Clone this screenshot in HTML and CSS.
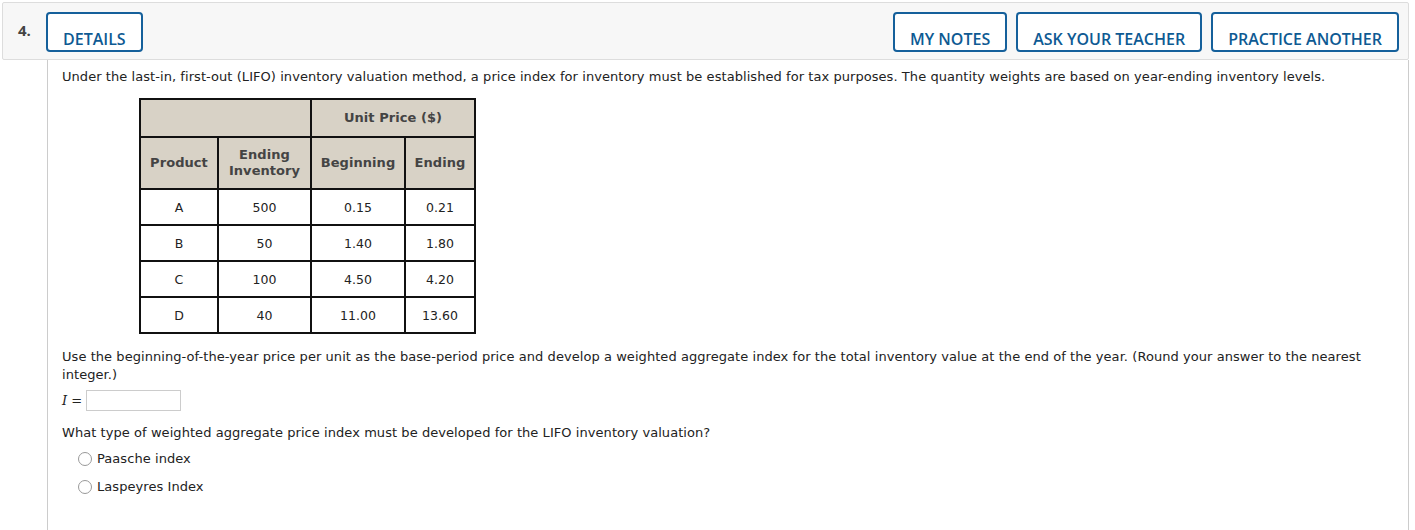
FILE: index.html
```html
<!DOCTYPE html>
<html>
<head>
<meta charset="utf-8">
<link rel="stylesheet" href="styles.css">
</head>
<body>
<div class="question">
  <div class="qhead">
    <span class="qnum">4.</span>
    <button class="btn">DETAILS</button>
    <div class="spacer"></div>
    <button class="btn">MY NOTES</button>
    <button class="btn">ASK YOUR TEACHER</button>
    <button class="btn">PRACTICE ANOTHER</button>
  </div>
  <div class="qbody">
    <p class="intro">Under the last-in, first-out (LIFO) inventory valuation method, a price index for inventory must be established for tax purposes. The quantity weights are based on year-ending inventory levels.</p>
    <table class="data">
      <tr class="h1">
        <th colspan="2"></th>
        <th colspan="2">Unit Price ($)</th>
      </tr>
      <tr class="h2">
        <th class="c1">Product</th>
        <th class="c2">Ending<br>Inventory</th>
        <th class="c3">Beginning</th>
        <th class="c4">Ending</th>
      </tr>
      <tr><td>A</td><td>500</td><td>0.15</td><td>0.21</td></tr>
      <tr><td>B</td><td>50</td><td>1.40</td><td>1.80</td></tr>
      <tr><td>C</td><td>100</td><td>4.50</td><td>4.20</td></tr>
      <tr><td>D</td><td>40</td><td>11.00</td><td>13.60</td></tr>
    </table>
    <p class="task">Use the beginning-of-the-year price per unit as the base-period price and develop a weighted aggregate index for the total inventory value at the end of the year. (Round your answer to the nearest integer.)</p>
    <div class="answer"><span class="var">I</span> <span class="eq">=</span> <span class="inbox"></span></div>
    <p class="task2">What type of weighted aggregate price index must be developed for the LIFO inventory valuation?</p>
    <div class="opt"><span class="radio"></span>Paasche index</div>
    <div class="opt"><span class="radio"></span>Laspeyres Index</div>
  </div>
</div>
</body>
</html>
```

FILE: styles.css
```css
html, body {
  margin: 0;
  padding: 0;
  background: #fff;
}
body {
  font-family: "DejaVu Sans", Verdana, sans-serif;
  font-size: 13px;
  letter-spacing: 0.06px;
  color: #222;
}
.question {
  margin: 2px 6px 0 2px;
}
.qhead {
  display: flex;
  align-items: flex-start;
  height: 58px;
  background: #f7f7f7;
  border: 1px solid #ddd;
  border-radius: 2px;
  padding: 0 9px 0 15px;
  box-sizing: border-box;
}
.qnum {
  font-family: "Open Sans", sans-serif;
  font-weight: 700;
  font-size: 15px;
  color: #444;
  margin-top: 17px;
  width: 28px;
  letter-spacing: 0;
}
.spacer { flex: 1; }
.btn {
  font-family: "Open Sans", sans-serif;
  font-weight: 600;
  font-size: 16px;
  letter-spacing: 0;
  color: #0e5a93;
  background: #fff;
  border: 2px solid #15609b;
  border-radius: 4px;
  height: 40px;
  margin-top: 9px;
  padding: 13px 15px 0;
  line-height: 20px;
  box-sizing: border-box;
  margin-left: 9px;
}
.qnum + .btn { margin-left: 0; padding: 13px 15px 0; }
.qbody {
  margin-left: 45px;
  border-left: 1px solid #ccc;
  border-right: 1px solid #ccc;
  padding: 8px 0 40px 14px;
  min-height: 430px;
}
.intro {
  margin: 0 0 12px;
  line-height: 18px;
}
table.data {
  border-collapse: collapse;
  margin-left: 77px;
  text-align: center;
}
table.data th, table.data td {
  border: 2px solid #111;
  padding: 0;
}
table.data th {
  background: #d8d2c6;
  color: #444;
  font-weight: bold;
  line-height: 16px;
}
.h1 th { height: 36px; }
.h2 th { height: 50px; }
.c1 { width: 76px; }
.c2 { width: 91px; }
.c3 { width: 92px; }
.c4 { width: 68px; }
table.data td {
  height: 34px;
  font-size: 12.5px;
  color: #222;
}
.task {
  margin: 14px 0 0;
  line-height: 18px;
  padding-right: 30px;
}
.answer {
  display: flex;
  align-items: center;
  margin-top: 6px;
  height: 20px;
}
.var {
  font-family: "DejaVu Serif", serif;
  font-style: italic;
  font-size: 13px;
}
.eq { margin: 0 4px 0 4px; }
.inbox {
  display: inline-block;
  width: 93px;
  height: 19px;
  border: 1px solid #ccc;
  background: #fff;
}
.task2 {
  margin: 14px 0 0;
  line-height: 18px;
}
.opt {
  display: flex;
  align-items: center;
  margin: 6px 0 0 16px;
  height: 21px;
}
.opt + .opt { margin-top: 7px; }
.radio {
  display: inline-block;
  width: 12px;
  height: 12px;
  border: 1px solid #999;
  border-radius: 50%;
  margin-right: 5px;
  background: #fff;
}
```
